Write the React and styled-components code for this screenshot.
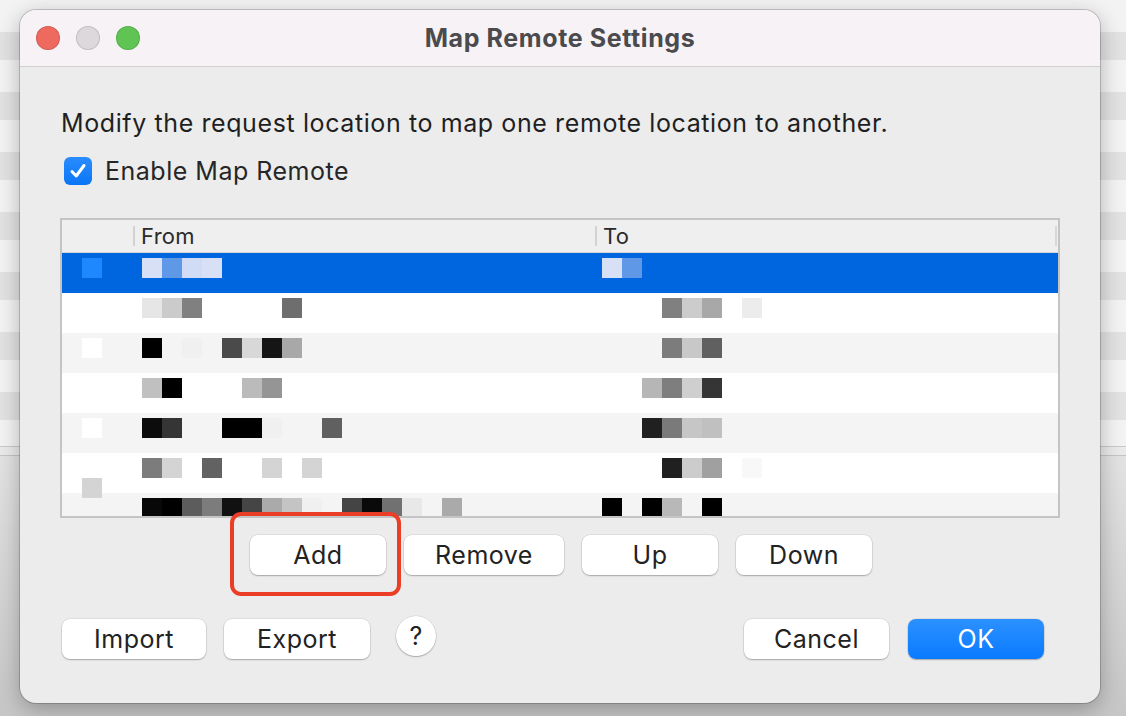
import React from "react"
import styled, { createGlobalStyle } from "styled-components"

const GlobalStyle = createGlobalStyle`
  html, body {
    margin: 0;
    padding: 0;
  }
  body {
    font-family: Inter, "Noto Sans", "Liberation Sans", sans-serif;
    color: #222;
  }
`

const Desktop = styled.div`
  width: 1126px;
  height: 716px;
  box-sizing: border-box;
  padding: 10px 26px 13px 20px;
  overflow: hidden;
  background:
    linear-gradient(to bottom, transparent 0, transparent 446px, #c9c9c9 446px, #c9c9c9 447px, #eaeaea 447px, #eaeaea 455px, #c4c4c4 455px, #c4c4c4 456px, #e2e2e2 456px, #c6c6c6 716px),
    repeating-linear-gradient(to bottom, #f3f3f3 0, #f3f3f3 32px, #e2e2e2 32px, #e2e2e2 60px);
  background-color: #dcdcdc;
`

const Window = styled.div`
  width: 1080px;
  height: 693px;
  border-radius: 16px;
  overflow: hidden;
  background: #ececec;
  box-shadow: 0 0 0 1px rgba(0, 0, 0, 0.18), 0 6px 22px rgba(0, 0, 0, 0.28);
  display: flex;
  flex-direction: column;
`

const TitleBar = styled.div`
  height: 56px;
  flex: none;
  background: #f6f2f5;
  border-bottom: 1px solid #cfcfcf;
  display: grid;
  grid-template-columns: 1fr auto 1fr;
  align-items: center;
  padding: 0 16px;
`

const Lights = styled.div`
  display: flex;
  gap: 16px;
`

const Light = styled.span`
  width: 24px;
  height: 24px;
  border-radius: 50%;
  background: ${(p) => p.color};
  box-shadow: inset 0 0 0 1px rgba(0, 0, 0, 0.12);
`

const Title = styled.div`
  font-size: 25px;
  font-weight: 700;
  color: #4b4a4c;
  letter-spacing: 0.6px;
`

const Body = styled.div`
  flex: 1;
  padding: 0 40px;
  display: flex;
  flex-direction: column;
`

const Description = styled.p`
  margin: 41px 0 0 1px;
  font-size: 25px;
  line-height: 30px;
  letter-spacing: 0.6px;
  color: #1f1f1f;
`

const CheckRow = styled.label`
  display: flex;
  align-items: center;
  gap: 13px;
  margin: 18px 0 0 4px;
  font-size: 25px;
  line-height: 30px;
  letter-spacing: 0.5px;
  color: #262626;
`

const CheckBox = styled.span`
  width: 28px;
  height: 28px;
  border-radius: 6px;
  background: linear-gradient(#2a8cff, #0a76f5);
  display: flex;
  align-items: center;
  justify-content: center;
`

const Table = styled.div`
  margin-top: 32px;
  height: 300px;
  box-sizing: border-box;
  border: 2px solid #c4c4c4;
  background: #fff;
  overflow: hidden;
`

const Header = styled.div`
  height: 32px;
  background: #efefef;
  border-bottom: 1px solid #d4d4d4;
  display: grid;
  grid-template-columns: 71px 462px 1fr;
  align-items: center;
  font-size: 22px;
  letter-spacing: 0.3px;
  color: #2a2a2a;
`

const HeadCell = styled.div`
  height: 20px;
  display: flex;
  align-items: center;
  padding-left: 6px;
  border-left: ${(p) => (p.first ? "none" : "2px solid #d2d2d2")};
  border-right: ${(p) => (p.last ? "2px solid #d8d8d8" : "none")};
  margin-right: ${(p) => (p.last ? "1px" : "0")};
`

const Row = styled.div`
  height: 40px;
  box-sizing: border-box;
  padding-top: 5px;
  display: grid;
  grid-template-columns: repeat(50, 20px);
  grid-template-rows: 20px 20px;
  background: ${(p) => (p.kind === "sel" ? "#0066e0" : p.kind === "alt" ? "#f4f4f4" : "#fff")};
`

const Pixel = styled.span`
  grid-column: ${(p) => p.col + 1};
  grid-row: ${(p) => (p.low ? 2 : 1)};
  background: ${(p) => p.color};
`

const ButtonRow = styled.div`
  display: flex;
  justify-content: center;
  gap: 18px;
  margin-top: 17px;
  padding-left: 2px;
`

const Button = styled.button`
  width: ${(p) => p.w}px;
  height: 40px;
  border: none;
  border-radius: 8px;
  background: ${(p) => (p.primary ? "linear-gradient(#2b91ff, #0a7aff)" : "#fff")};
  color: ${(p) => (p.primary ? "#fff" : "#222")};
  font-family: inherit;
  font-size: 25px;
  letter-spacing: 0.5px;
  box-shadow: 0 1px 1.5px rgba(0, 0, 0, 0.25), 0 0 0 0.5px rgba(0, 0, 0, 0.12);
  padding: 0;
`

const Highlight = styled.div`
  position: relative;
  display: flex;
`

const RedBox = styled.span`
  position: absolute;
  left: -20px;
  top: -23px;
  width: 171px;
  height: 84px;
  box-sizing: border-box;
  border: 4px solid #ea3f26;
  border-radius: 11px;
  pointer-events: none;
`

const Footer = styled.div`
  display: flex;
  align-items: center;
  margin-top: 44px;
  padding: 0 16px 0 2px;
`

const Group = styled.div`
  display: flex;
  align-items: center;
  gap: ${(p) => p.gap}px;
`

const Spacer = styled.div`
  flex: 1;
`

const HelpButton = styled.button`
  width: 40px;
  height: 40px;
  margin-left: 8px;
  margin-top: -6px;
  border: none;
  border-radius: 50%;
  background: #fff;
  font-family: inherit;
  font-size: 25px;
  color: #222;
  box-shadow: 0 1px 1.5px rgba(0, 0, 0, 0.25), 0 0 0 0.5px rgba(0, 0, 0, 0.12);
  padding: 0;
`

const rows = [
  { kind: "sel", cells: [[1, "#1e88ff"], [4, "#d8e0f5"], [5, "#6098e8"], [6, "#d0dcf5"], [7, "#d8e0f5"], [27, "#d8e0f5"], [28, "#6098e8"]] },
  { kind: "plain", cells: [[4, "#e6e6e6"], [5, "#cbcbcb"], [6, "#808080"], [11, "#6e6e6e"], [30, "#808080"], [31, "#cccccc"], [32, "#a8a8a8"], [34, "#ececec"]] },
  { kind: "alt", cells: [[1, "#ffffff"], [4, "#000000"], [6, "#f0f0f0"], [8, "#4a4a4a"], [9, "#d8d8d8"], [10, "#151515"], [11, "#a8a8a8"], [30, "#7c7c7c"], [31, "#c8c8c8"], [32, "#606060"]] },
  { kind: "plain", cells: [[4, "#c0c0c0"], [5, "#000000"], [9, "#bbbbbb"], [10, "#959595"], [29, "#b6b6b6"], [30, "#7e7e7e"], [31, "#cfcfcf"], [32, "#353535"]] },
  { kind: "alt", cells: [[1, "#ffffff"], [4, "#0c0c0c"], [5, "#353535"], [8, "#000000"], [9, "#000000"], [10, "#f0f0f0"], [13, "#606060"], [29, "#202020"], [30, "#7a7a7a"], [31, "#c6c6c6"], [32, "#c0c0c0"]] },
  { kind: "plain", cells: [[1, "#d4d4d4", true], [4, "#7c7c7c"], [5, "#d4d4d4"], [7, "#626262"], [10, "#d4d4d4"], [12, "#d4d4d4"], [30, "#202020"], [31, "#cccccc"], [32, "#a0a0a0"], [34, "#f8f8f8"]] },
  { kind: "alt", cells: [[4, "#080808"], [5, "#000000"], [6, "#5c5c5c"], [7, "#7c7c7c"], [8, "#111111"], [9, "#454545"], [10, "#aaaaaa"], [11, "#c4c4c4"], [12, "#f0f0f0"], [14, "#444444"], [15, "#0a0a0a"], [16, "#717171"], [17, "#e8e8e8"], [19, "#aaaaaa"], [27, "#000000"], [29, "#000000"], [30, "#b8b8b8"], [32, "#000000"]] },
]

const Check = () => (
  <svg width="20" height="20" viewBox="0 0 20 20">
    <path d="M4 10.5 L8.2 15 L16 4.5" fill="none" stroke="#fff" strokeWidth="3" strokeLinecap="round" strokeLinejoin="round" />
  </svg>
)

const App = () => {
  return (
    <Desktop>
      <GlobalStyle />
      <Window>
        <TitleBar>
          <Lights>
            <Light color="#ee6a5f" />
            <Light color="#dcd8dc" />
            <Light color="#5fc454" />
          </Lights>
          <Title>Map Remote Settings</Title>
          <span />
        </TitleBar>
        <Body>
          <Description>Modify the request location to map one remote location to another.</Description>
          <CheckRow>
            <CheckBox><Check /></CheckBox>
            Enable Map Remote
          </CheckRow>
          <Table>
            <Header>
              <HeadCell first />
              <HeadCell>From</HeadCell>
              <HeadCell last>To</HeadCell>
            </Header>
            {rows.map((row, i) => (
              <Row key={i} kind={row.kind}>
                {row.cells.map(([col, color, low]) => (
                  <Pixel key={col + (low ? "l" : "")} col={col} color={color} low={low} />
                ))}
              </Row>
            ))}
          </Table>
          <ButtonRow>
            <Highlight>
              <Button w={136}>Add</Button>
              <RedBox />
            </Highlight>
            <Button w={160}>Remove</Button>
            <Button w={136}>Up</Button>
            <Button w={136}>Down</Button>
          </ButtonRow>
          <Footer>
            <Group gap={18}>
              <Button w={144}>Import</Button>
              <Button w={146}>Export</Button>
              <HelpButton>?</HelpButton>
            </Group>
            <Spacer />
            <Group gap={19}>
              <Button w={145}>Cancel</Button>
              <Button w={136} primary>OK</Button>
            </Group>
          </Footer>
        </Body>
      </Window>
    </Desktop>
  )
}

export default App
